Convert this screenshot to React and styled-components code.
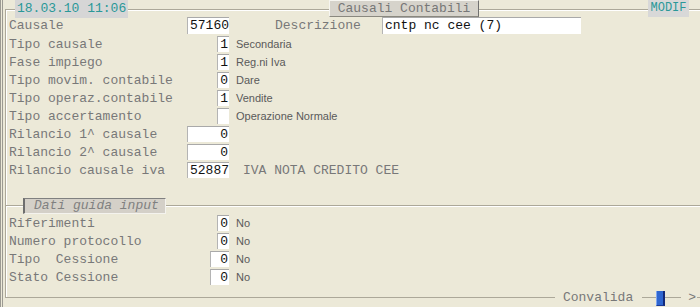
import React from "react";
import styled, { createGlobalStyle } from "styled-components";

const GlobalStyle = createGlobalStyle`
  html, body {
    margin: 0;
    padding: 0;
    background: #ece9d8;
  }
  body {
    font-family: "Liberation Mono", "Courier New", monospace;
    font-size: 13px;
  }
`;

const Window = styled.div`
  width: 700px;
  height: 307px;
  box-sizing: border-box;
  border-left: 3px double #9c9a92;
  padding-left: 2px;
  padding-top: 9px;
  overflow: hidden;
  background: #ece9d8;
`;

const Frame = styled.div`
  height: 289px;
  box-sizing: border-box;
  display: flex;
  flex-direction: column;
  border-left: 1px solid #aca899;
  border-top: 1px solid #aca899;
  border-bottom: 1px solid #aca899;
  box-shadow: inset 1px 1px 0 #fff;
`;

const Header = styled.div`
  display: flex;
  align-items: flex-start;
  height: 18px;
  margin-top: -10px;
  margin-bottom: -3px;
`;

const DateBox = styled.div`
  margin-left: 9px;
  width: 113px;
  height: 18px;
  line-height: 18px;
  padding-left: 2px;
  box-sizing: border-box;
  background: #d6d6d6;
  color: #2a9898;
`;

const TitleTab = styled.div`
  margin-left: 201px;
  width: 150px;
  height: 17px;
  line-height: 15px;
  box-sizing: border-box;
  background: #d6d3cb;
  border-top: 1px solid #f6f5f0;
  border-left: 1px solid #f6f5f0;
  border-right: 1px solid #707070;
  border-bottom: 1px solid #8a887f;
  color: #777;
  text-align: center;
`;

const ModeBox = styled.div`
  margin-left: 169px;
  width: 41px;
  height: 17px;
  line-height: 17px;
  background: #d8d8d8;
  color: #2a9898;
  font-size: 12px;
  text-align: center;
`;

const Section = styled.div`
  display: flex;
  flex-direction: column;
  padding-left: 3px;
`;

const Row = styled.div`
  display: flex;
  align-items: center;
  height: ${(p) => p.$h || 18}px;
`;

const Label = styled.div`
  width: 178px;
  flex-shrink: 0;
  color: #787878;
  white-space: pre;
`;

const FieldCell = styled.div`
  width: 42px;
  flex-shrink: 0;
  display: flex;
  justify-content: flex-end;
`;

const Field = styled.div`
  width: ${(p) => p.$w}px;
  height: ${(p) => (p.$tall ? 17 : 16)}px;
  line-height: ${(p) => (p.$tall ? 16 : 15)}px;
  box-sizing: border-box;
  background: #fff;
  border-top: 1px solid #a9a9a9;
  border-left: 1px solid #b4b4b4;
  padding: 0 1px 0 2px;
  color: #111;
  text-align: ${(p) => (p.$left ? "left" : "right")};
  white-space: pre;
  overflow: hidden;
`;

const Note = styled.div`
  margin-left: 7px;
  font-family: "Liberation Sans", Arial, sans-serif;
  font-size: 11px;
  color: #5a5a5a;
  white-space: nowrap;
`;

const MonoNote = styled.div`
  margin-left: 14px;
  color: #787878;
  white-space: nowrap;
`;

const SideLabel = styled.div`
  margin-left: 46px;
  width: 107px;
  color: #787878;
`;

const Separator = styled.div`
  display: flex;
  align-items: center;
  height: 16px;
  margin-top: 19px;
`;

const Rule = styled.div`
  flex: ${(p) => (p.$w ? `0 0 ${p.$w}px` : "1")};
  border-top: 1px solid #aca899;
  border-bottom: 1px solid #fff;
`;

const GroupLegend = styled.div`
  width: 143px;
  height: 16px;
  line-height: 14px;
  box-sizing: border-box;
  padding-left: 9px;
  background: #d4d0c8;
  border-top: 1px solid #808080;
  border-left: 2px solid #6e6e6e;
  border-right: 1px solid #f4f3ee;
  border-bottom: 1px solid #f4f3ee;
  color: #808080;
  font-style: italic;
`;

const Footer = styled.div`
  display: flex;
  align-items: center;
  height: 18px;
  margin-top: auto;
  margin-bottom: -10px;
`;

const Spacer = styled.div`
  flex: ${(p) => (p.$w ? `0 0 ${p.$w}px` : "1")};
`;

const FooterLabel = styled.div`
  height: 18px;
  line-height: 18px;
  padding: ${(p) => p.$pad};
  background: #ece9d8;
  color: #787878;
`;

const BlueKey = styled.div`
  width: 9px;
  height: 15px;
  box-sizing: border-box;
  background: #2f66d0;
  border-left: 1px solid #7fa6ee;
  border-right: 2px solid #132a7a;
  border-bottom: 1px solid #1c3a96;
`;

const topRows = [
  { label: "Tipo causale", value: "1", w: 12, note: "Secondaria" },
  { label: "Fase impiego", value: "1", w: 12, note: "Reg.ni Iva" },
  { label: "Tipo movim. contabile", value: "0", w: 12, note: "Dare" },
  { label: "Tipo operaz.contabile", value: "1", w: 12, note: "Vendite" },
  { label: "Tipo accertamento", value: "", w: 12, note: "Operazione Normale" },
  { label: "Rilancio 1^ causale", value: "0", w: 42 },
  { label: "Rilancio 2^ causale", value: "0", w: 42 },
  { label: "Rilancio causale iva", value: "52887", w: 42, mono: "IVA NOTA CREDITO CEE" },
];

const guideRows = [
  { label: "Riferimenti", value: "0", w: 12, note: "No" },
  { label: "Numero protocollo", value: "0", w: 12, note: "No" },
  { label: "Tipo  Cessione", value: "0", w: 19, note: "No" },
  { label: "Stato Cessione", value: "0", w: 19, note: "No" },
];

function FieldRow({ row }) {
  return (
    <Row>
      <Label>{row.label}</Label>
      <FieldCell>
        <Field $w={row.w}>{row.value}</Field>
      </FieldCell>
      {row.note && <Note>{row.note}</Note>}
      {row.mono && <MonoNote>{row.mono}</MonoNote>}
    </Row>
  );
}

export default function App() {
  return (
    <>
      <GlobalStyle />
      <Window>
        <Frame>
          <Header>
            <DateBox>18.03.10 11:06</DateBox>
            <TitleTab>Causali Contabili</TitleTab>
            <ModeBox>MODIF</ModeBox>
          </Header>

          <Section>
            <Row $h={20}>
              <Label>Causale</Label>
              <FieldCell>
                <Field $w={42} $tall>57160</Field>
              </FieldCell>
              <SideLabel>Descrizione</SideLabel>
              <Field $w={199} $tall $left>cntp nc cee (7)</Field>
            </Row>
            {topRows.map((r) => (
              <FieldRow key={r.label} row={r} />
            ))}
          </Section>

          <Separator>
            <Rule $w={17} />
            <GroupLegend>Dati guida input</GroupLegend>
            <Rule />
          </Separator>

          <Section>
            {guideRows.map((r) => (
              <FieldRow key={r.label} row={r} />
            ))}
          </Section>

          <Footer>
            <Spacer />
            <FooterLabel $pad="0 9px 0 8px">Convalida</FooterLabel>
            <Spacer $w={14} />
            <BlueKey />
            <Spacer $w={16} />
            <FooterLabel $pad="0 1px 0 7px">&gt;</FooterLabel>
            <Spacer $w={3} />
          </Footer>
        </Frame>
      </Window>
    </>
  );
}
